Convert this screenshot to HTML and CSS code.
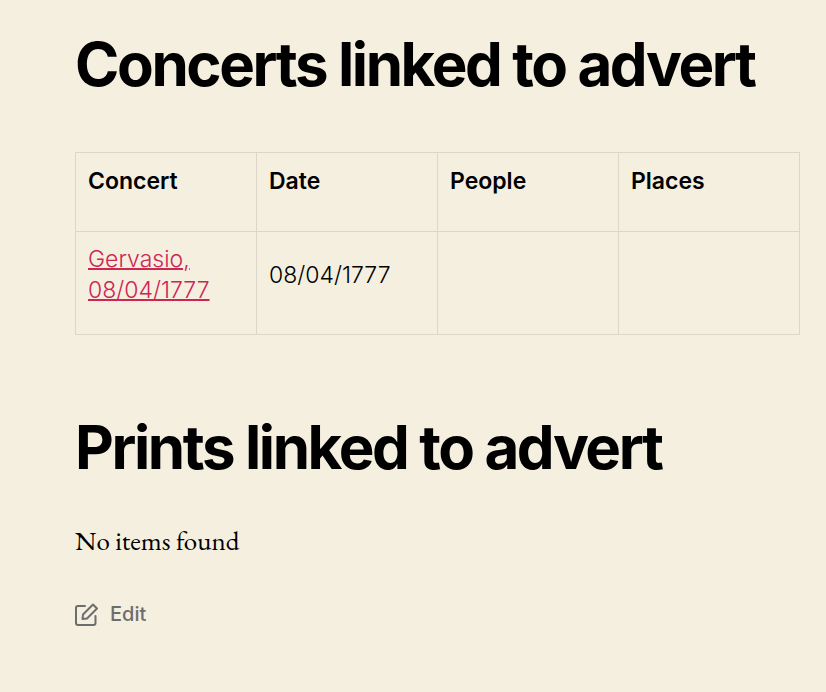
FILE: index.html
```html
<!DOCTYPE html>
<html lang="en">
<head>
    <meta charset="UTF-8">
    <meta name="viewport" content="width=device-width, initial-scale=1.0">
    <title>Concerts linked to advert</title>
    <link rel="stylesheet" href="styles.css">
</head>
<body>
    <main class="entry-content">
        <h2>Concerts linked to advert</h2>
        <table class="linked-items">
            <thead>
                <tr>
                    <th scope="col">Concert</th>
                    <th scope="col">Date</th>
                    <th scope="col">People</th>
                    <th scope="col">Places</th>
                </tr>
            </thead>
            <tbody>
                <tr>
                    <td><a href="#">Gervasio, 08/04/1777</a></td>
                    <td>08/04/1777</td>
                    <td></td>
                    <td></td>
                </tr>
            </tbody>
        </table>

        <h2>Prints linked to advert</h2>
        <p class="no-items">No items found</p>

        <a class="edit-link" href="#">
            <svg class="edit-icon" viewBox="0 0 23 23" aria-hidden="true">
                <path d="M10 3H3Q1 3 1 5V20Q1 22 3 22H18.500Q20.500 22 20.500 20V13"/>
                <path d="M18 1.500L22 5.500L12 15.500L7.500 16L8 11.500Z"/>
            </svg>
            <span>Edit</span>
        </a>
    </main>
</body>
</html>
```

FILE: styles.css
```css
* {
    box-sizing: border-box;
}

body {
    margin: 0;
    background-color: #f5efe0;
    color: #000;
    font-family: Inter, "Liberation Sans", sans-serif;
}

.entry-content {
    padding: 27px 26px 28px 75px;
}

h2 {
    margin: 0;
    font-size: 60px;
    font-weight: 700;
    line-height: 74px;
    letter-spacing: -0.04em;
}

.linked-items {
    width: 100%;
    margin: 51px 0 75px;
    border-collapse: collapse;
    table-layout: fixed;
    font-size: 23px;
    font-weight: 300;
    line-height: 31px;
}

.linked-items th,
.linked-items td {
    padding: 12px 12px 28px;
    border: 1px solid #dcd7ca;
    text-align: left;
}

.linked-items th {
    padding-top: 13px;
    padding-bottom: 34px;
    font-weight: 600;
}

a {
    color: #cd2653;
    text-decoration-thickness: 2px;
}

.no-items {
    margin: 38px 0;
    font-family: "EB Garamond", "Liberation Serif", serif;
    font-size: 27px;
    line-height: 38px;
}

.edit-link {
    display: inline-flex;
    align-items: center;
    gap: 12px;
    color: #6d6d6d;
    font-size: 20px;
    font-weight: 500;
    line-height: 32px;
    text-decoration: none;
}

.edit-icon {
    width: 23px;
    height: 23px;
    fill: none;
    stroke: currentColor;
    stroke-width: 2;
    stroke-linecap: round;
    stroke-linejoin: round;
}
```
